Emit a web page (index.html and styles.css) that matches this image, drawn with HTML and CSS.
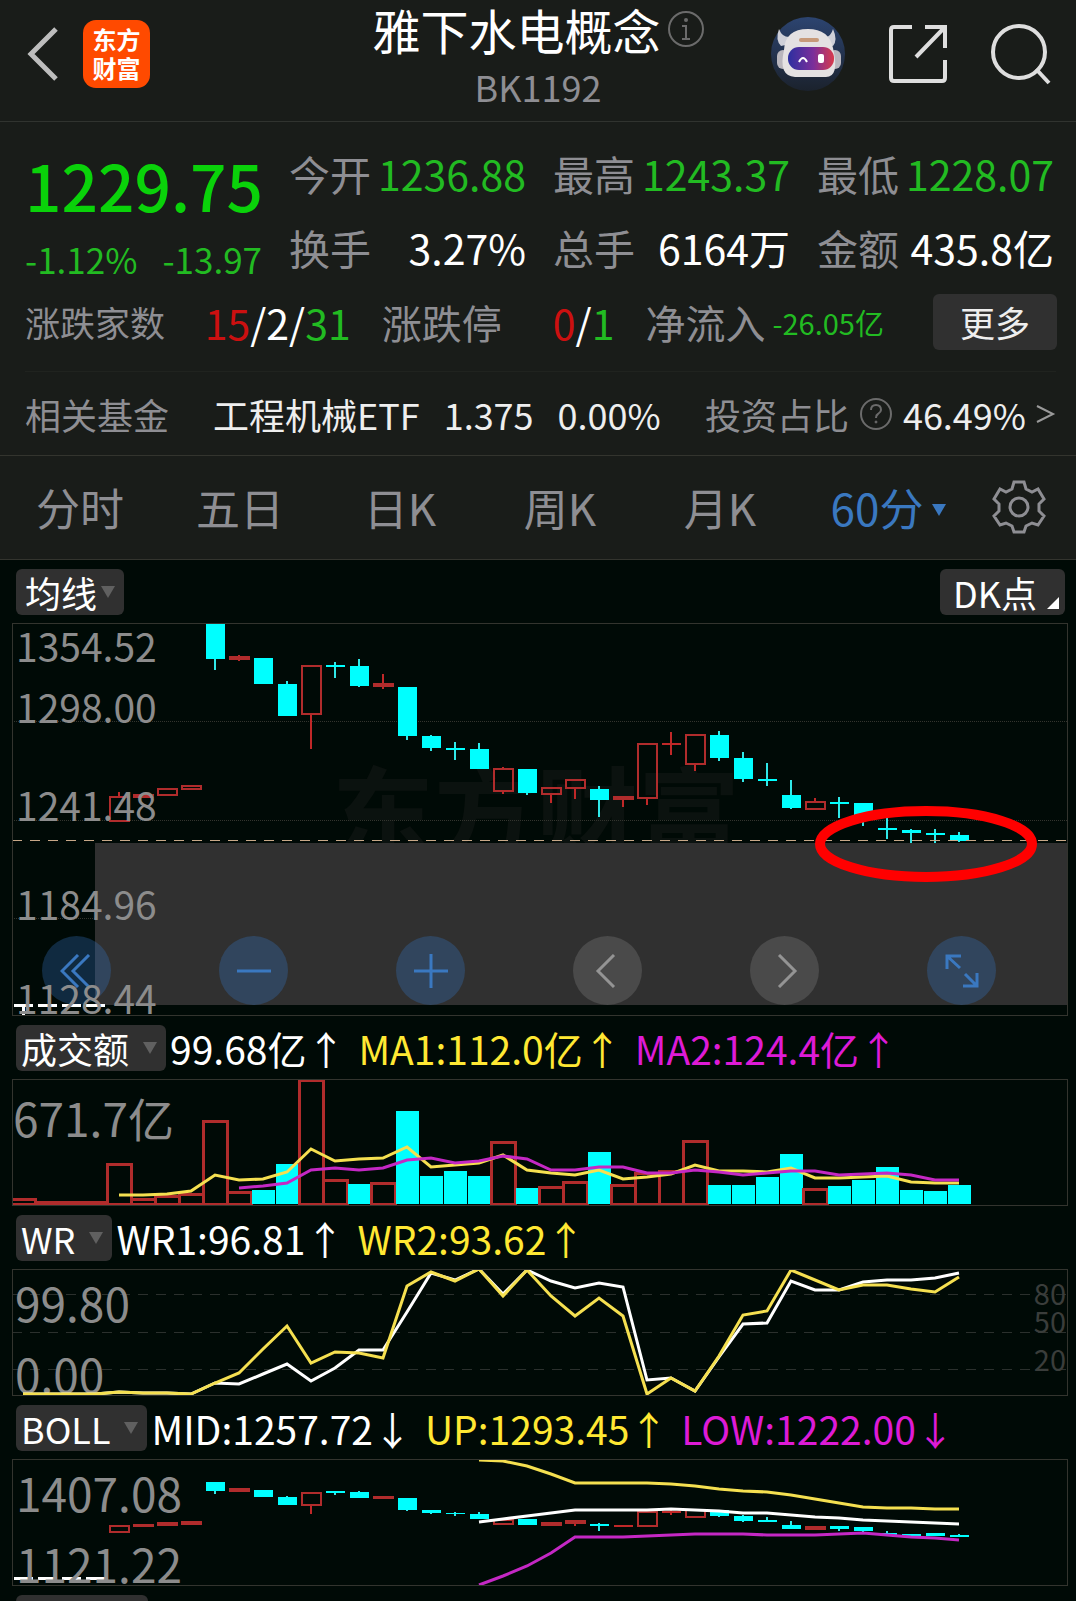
FILE: index.html
```html
<!DOCTYPE html>
<html lang="zh-CN">
<head>
	<meta charset="UTF-8"/>
	<meta name="viewport" content="width=device-width, initial-scale=1"/>
	<title>雅下水电概念 BK1192</title>
	<link rel="stylesheet" href="styles.css">
</head>
<body>

<header class="topbar">
	<div class="topbar-left">
		<button class="icon-btn" aria-label="返回">
			<svg width="34" height="56" viewBox="0 0 34 56"><path d="M32 3 L7 28 L32 53" fill="none" stroke="#bdbdbd" stroke-width="5"/></svg>
		</button>
		<a class="logo" href="#">东方<br>财富</a>
	</div>
	<div class="topbar-title">
		<h1>雅下水电概念
			<svg width="36" height="36" viewBox="0 0 36 36"><circle cx="18" cy="18" r="17" fill="none" stroke="#6b6b6b" stroke-width="2"/><circle cx="18" cy="9" r="2" fill="#6b6b6b"/><path d="M14 15 H18 V28 M14 28 H22" fill="none" stroke="#6b6b6b" stroke-width="2"/></svg>
		</h1>
		<p>BK1192</p>
	</div>
	<div class="topbar-right">
		<button class="icon-btn" aria-label="智能助手">
			<svg width="76" height="76" viewBox="0 0 76 76">
				<defs>
					<linearGradient id="sky" x1="0" y1="0" x2="0" y2="1"><stop offset="0" stop-color="#2c4470"/><stop offset="1" stop-color="#1b222d"/></linearGradient>
					<linearGradient id="visor" x1="0" y1="0" x2="1" y2="0"><stop offset="0" stop-color="#2c2fa0"/><stop offset="0.55" stop-color="#7b2f9a"/><stop offset="1" stop-color="#d83a4c"/></linearGradient>
				</defs>
				<circle cx="38" cy="38" r="37" fill="url(#sky)"/>
				<path d="M9 13 Q5 24 11 30 L20 28 L19 21 Q12 21 9 13 Z" fill="#cfd0d8"/>
				<path d="M63 13 Q68 24 63 30 L54 28 L56 21 Q61 20 63 13 Z" fill="#cfd0d8"/>
				<rect x="7" y="34" width="12" height="19" rx="6" fill="#b9b6bd"/>
				<rect x="59" y="34" width="12" height="19" rx="6" fill="#b9b6bd"/>
				<path d="M14 34 Q15 13 38 13 Q59 13 63 32 Q70 62 55 61 H25 Q8 60 14 34 Z" fill="#e4e1e2"/>
				<path d="M31 24 H47" stroke="#c79a7a" stroke-width="4" stroke-linecap="round"/>
				<rect x="18" y="31" width="46" height="23" rx="11" fill="url(#visor)"/>
				<path d="M29 46 Q33 38 37 46" fill="none" stroke="#ffffff" stroke-width="2"/>
				<rect x="48" y="38" width="6" height="9" rx="2" fill="#ffffff"/>
			</svg>
		</button>
		<button class="icon-btn" aria-label="分享">
			<svg width="60" height="60" viewBox="0 0 60 60"><path d="M24 3 H6 Q3 3 3 6 V54 Q3 57 6 57 H54 Q57 57 57 54 V36 M37 3 H57 V24 M57 3 L28 33" fill="none" stroke="#dedede" stroke-width="4"/></svg>
		</button>
		<button class="icon-btn" aria-label="搜索">
			<svg width="62" height="62" viewBox="0 0 62 62"><circle cx="29" cy="29" r="26" fill="none" stroke="#dedede" stroke-width="4"/><path d="M46 46 L59 60" stroke="#dedede" stroke-width="4"/></svg>
		</button>
	</div>
</header>

<section class="quote">
	<div class="quote-grid">
		<div class="price">
			<strong>1229.75</strong>
			<div class="change"><span>-1.12%</span><span>-13.97</span></div>
		</div>
		<div class="stat"><span class="label">今开</span><span class="down">1236.88</span></div>
		<div class="stat"><span class="label">最高</span><span class="down">1243.37</span></div>
		<div class="stat"><span class="label">最低</span><span class="down">1228.07</span></div>
		<div class="stat"><span class="label">换手</span><span>3.27%</span></div>
		<div class="stat"><span class="label">总手</span><span>6164万</span></div>
		<div class="stat"><span class="label">金额</span><span>435.8亿</span></div>
	</div>
	<div class="breadth">
		<div class="stat"><span class="label small">涨跌家数</span><span><b class="up">15</b>/2/<b class="down">31</b></span></div>
		<div class="stat"><span class="label">涨跌停</span><span><b class="up">0</b>/<b class="down">1</b></span></div>
		<div class="stat inflow"><span class="label">净流入</span><span class="down">-26.05亿</span></div>
		<button class="more">更多</button>
	</div>
	<div class="fund">
		<span class="label">相关基金</span>
		<a class="fund-name" href="#">工程机械ETF</a>
		<span>1.375</span>
		<span>0.00%</span>
		<a class="fund-ratio" href="#">
			<span class="label">投资占比</span>
			<svg width="34" height="34" viewBox="0 0 34 34"><circle cx="17" cy="17" r="15" fill="none" stroke="#6b6b6b" stroke-width="2"/><path d="M12 13 Q12 8 17 8 Q22 8 22 13 Q22 15 19 17 Q17 18 17 21" fill="none" stroke="#6b6b6b" stroke-width="2"/><circle cx="17" cy="25" r="1" fill="#6b6b6b" stroke="#6b6b6b"/></svg>
			<span>46.49%</span>
			<svg width="20" height="20" viewBox="0 0 20 20"><path d="M1 2 L17 10 L1 18" fill="none" stroke="#9a9a9a" stroke-width="2"/></svg>
		</a>
	</div>
</section>

<nav class="tabs">
	<button>分时</button>
	<button>五日</button>
	<button>日K</button>
	<button>周K</button>
	<button>月K</button>
	<button class="active">60分<i class="caret"></i></button>
	<button class="gear" aria-label="设置">
		<svg width="54" height="54" viewBox="-27 -27 54 54">
			<path d="M-5 -25 H5 L7 -18 L13 -15 L19 -18 L25 -8 L20 -3 V4 L25 9 L19 18 L13 16 L7 19 L5 25 H-5 L-7 19 L-13 16 L-19 18 L-25 9 L-20 4 V-3 L-25 -8 L-19 -18 L-13 -15 L-7 -18 Z" fill="none" stroke="#8e8e93" stroke-width="3"/>
			<circle r="9" fill="none" stroke="#8e8e93" stroke-width="3"/>
		</svg>
	</button>
</nav>

<main class="charts">
	<div class="chart-head">
		<button class="pill tight">均线<i class="caret"></i></button>
		<button class="pill corner">DK点</button>
	</div>
	<div class="chart">
		<div class="mask"></div>
		<div class="tools">
			<button aria-label="展开"><svg width="34" height="34" viewBox="0 0 34 34"><path d="M18 1 L2 17 L18 33 M29 1 L13 17 L29 33"/></svg></button>
			<button aria-label="缩小"><svg width="34" height="34" viewBox="0 0 34 34"><path d="M0 17 H34"/></svg></button>
			<button aria-label="放大"><svg width="34" height="34" viewBox="0 0 34 34"><path d="M0 17 H34 M17 0 V34"/></svg></button>
			<button class="muted" aria-label="左移"><svg width="34" height="34" viewBox="0 0 34 34"><path d="M23 1 L7 17 L23 33"/></svg></button>
			<button class="muted" aria-label="右移"><svg width="34" height="34" viewBox="0 0 34 34"><path d="M11 1 L27 17 L11 33"/></svg></button>
			<button aria-label="全屏"><svg width="34" height="34" viewBox="0 0 34 34"><path d="M2 15 V2 H16 M2 2 L15 14 M20 20 L32 32 M32 19 V32 H18"/></svg></button>
		</div>
		<svg id="kline" viewBox="0 0 1056 393"></svg>
	</div>

	<div class="chart-head">
		<button class="pill">成交额<i class="caret"></i></button>
		<span class="reading">99.68亿↑</span>
		<span class="reading yellow">MA1:112.0亿↑</span>
		<span class="reading magenta">MA2:124.4亿↑</span>
	</div>
	<div class="chart"><svg id="volume" viewBox="0 0 1056 127"></svg></div>

	<div class="chart-head">
		<button class="pill">WR<i class="caret"></i></button>
		<span class="reading">WR1:96.81↑</span>
		<span class="reading yellow">WR2:93.62↑</span>
	</div>
	<div class="chart"><svg id="wr" viewBox="0 0 1056 127"></svg></div>

	<div class="chart-head">
		<button class="pill">BOLL<i class="caret"></i></button>
		<span class="reading">MID:1257.72↓</span>
		<span class="reading yellow">UP:1293.45↑</span>
		<span class="reading magenta">LOW:1222.00↓</span>
	</div>
	<div class="chart"><svg id="boll" viewBox="0 0 1056 127"></svg></div>

	<div class="chart-head">
		<button class="pill next" aria-label="指标"></button>
	</div>
</main>

<script src="charts.js"></script>
</body>
</html>
```
FILE: styles.css
```css
* {
    box-sizing: border-box;
}

body {
    margin: 0;
    height: 100vh;
    overflow: hidden;
    background-color: #000a06;
    color: #ffffff;
    font-family: "Noto Sans CJK SC", "Noto Sans", sans-serif;
    font-size: 41px;
}

button {
    padding: 0;
    border: none;
    background: none;
    color: inherit;
    font: inherit;
    cursor: pointer;
}

a {
    color: inherit;
    text-decoration: none;
}

svg {
    display: block;
}

.label {
    color: #8e8e93;
}

.up {
    color: #cc1010;
    font-weight: normal;
}

.down {
    color: #22bb22;
    font-weight: normal;
}

/* Top bar */
.topbar {
    display: grid;
    grid-template-columns: 1fr auto 1fr;
    height: 122px;
    padding: 0 24px;
    background-color: #191c19;
    border-bottom: 1px solid #30332f;
}

.topbar-left,
.topbar-right {
    display: flex;
    align-items: center;
    height: 108px;
}

.topbar-left {
    gap: 25px;
}

.topbar-right {
    justify-content: flex-end;
    gap: 42px;
}

.logo {
    width: 67px;
    height: 68px;
    padding-top: 4px;
    border-radius: 13px;
    background-color: #ff4a00;
    font-size: 24px;
    font-weight: bold;
    line-height: 29px;
    text-align: center;
}

.topbar-title {
    text-align: center;
}

.topbar-title h1 {
    display: flex;
    align-items: center;
    gap: 7px;
    margin: 0;
    font-size: 48px;
    font-weight: normal;
    line-height: 58px;
}

.topbar-title p {
    margin: 0;
    color: #8e8e93;
    font-size: 36px;
    line-height: 56px;
}

/* Quote */
.quote {
    background-color: #191c19;
    border-bottom: 1px solid #33342e;
}

.quote-grid {
    display: grid;
    grid-template-columns: repeat(4, minmax(0, 1fr));
    grid-auto-rows: 74px;
    column-gap: 27px;
    padding: 14px 22px 0 25px;
}

.price {
    grid-row: span 2;
    color: #0ad20a;
}

.price strong {
    display: block;
    font-size: 64px;
    font-weight: 500;
    line-height: 96px;
}

.change {
    display: flex;
    justify-content: space-between;
    color: #22bb22;
    font-size: 35px;
    line-height: 54px;
}

.stat {
    display: flex;
    align-items: center;
    justify-content: space-between;
    white-space: nowrap;
}

.breadth {
    display: grid;
    grid-template-columns: 326fr 233fr 257fr 124fr;
    column-gap: 31px;
    align-items: center;
    height: 75px;
    padding: 0 19px 0 25px;
}

.breadth .label {
    font-size: 40px;
}

.breadth .small {
    font-size: 35px;
}

.breadth .inflow {
    justify-content: flex-start;
    gap: 7px;
}

.inflow .down {
    font-size: 29px;
}

.more {
    height: 56px;
    border-radius: 6px;
    background-color: #303030;
    color: #eeeeee;
    font-size: 35px;
    line-height: 50px;
}

.fund {
    display: flex;
    align-items: center;
    gap: 24px;
    height: 84px;
    margin: 12px 20px 0 25px;
    border-top: 1px solid #20231f;
    color: #eeeeee;
    font-size: 36px;
}

.fund-name {
    margin-left: 20px;
}

.fund-ratio {
    display: flex;
    align-items: center;
    gap: 10px;
    margin-left: auto;
}

/* Period tabs */
.tabs {
    display: grid;
    grid-template-columns: repeat(5, 160fr) 177fr 99fr;
    height: 104px;
    padding-bottom: 2px;
    background-color: #191c19;
    border-bottom: 1px solid #33342e;
    color: #8e8e93;
    font-size: 44px;
}

.tabs .active {
    color: #3a78c0;
}

.caret {
    display: inline-block;
    border: 7px solid transparent;
    border-top: 12px solid #606060;
    border-bottom: none;
}

.tabs .caret {
    margin-left: 9px;
    margin-bottom: 10px;
    border-top-color: #3a78c0;
}

.gear svg {
    margin-left: 15px;
}

/* Charts */
.charts {
    padding: 0 8px 0 12px;
}

.chart-head {
    display: flex;
    align-items: center;
    height: 63px;
    padding: 0 3px 0 4px;
    white-space: nowrap;
}

.pill {
    display: flex;
    align-items: center;
    height: 46px;
    margin-right: 4px;
    padding: 0 9px 0 5px;
    border-radius: 6px;
    background-color: #303030;
    font-size: 36px;
    line-height: 46px;
}

.pill .caret {
    margin-left: 14px;
}

.pill.tight {
    padding-left: 9px;
}

.pill.tight .caret {
    margin-left: 4px;
}

.pill.corner {
    position: relative;
    margin-left: auto;
    margin-right: 0;
    padding: 0 28px 0 13px;
}

.corner::after {
    content: "";
    position: absolute;
    right: 6px;
    bottom: 6px;
    border-left: 12px solid transparent;
    border-bottom: 12px solid #ffffff;
}

.pill.next {
    width: 132px;
}

.reading {
    margin-right: 13px;
    font-size: 39px;
}

.yellow {
    color: #ffe833;
}

.magenta {
    color: #dd1bd6;
}

.chart {
    position: relative;
}

.chart > svg {
    position: relative;
    width: 100%;
    outline: 1px solid #33342e;
    outline-offset: -1px;
    pointer-events: none;
}

.mask {
    position: absolute;
    top: 56%;
    right: 0;
    bottom: 11px;
    left: 83px;
    background-color: #303030;
}

.tools {
    position: absolute;
    right: 72px;
    bottom: 11px;
    left: 30px;
    display: flex;
    justify-content: space-between;
}

.tools button {
    display: grid;
    place-items: center;
    width: 69px;
    height: 69px;
    border-radius: 50%;
    background-color: rgba(54, 120, 200, 0.3);
}

.tools .muted {
    background-color: rgba(150, 150, 150, 0.25);
}

.tools path {
    fill: none;
    stroke: #3a78c0;
    stroke-width: 3;
}

.tools .muted path {
    stroke: #949494;
}

/* Chart marks */
.chart rect,
.chart line {
    shape-rendering: crispEdges;
}

.cyan-fill {
    fill: #00ffff;
}

.red-box {
    fill: none;
    stroke: #b02c2c;
    stroke-width: 2;
}

.red-box.bar {
    stroke-width: 3;
}

.wick-c {
    stroke: #30e8e8;
    stroke-width: 2;
}

.wick-r {
    stroke: #c02828;
    stroke-width: 2;
}

.wick-w {
    stroke: #ffffff;
    stroke-width: 3;
}

.line {
    fill: none;
    stroke: #ffffff;
    stroke-width: 3;
}

.line.l-yellow {
    stroke: #f5e050;
}

.line.l-magenta {
    stroke: #c428c4;
}

.dots {
    stroke: #33342e;
    stroke-dasharray: 1 1;
}

.dashes {
    stroke: #2b302d;
    stroke-dasharray: 10 8;
}

.last {
    stroke: #c8a888;
    stroke-dasharray: 10 8;
}

.axis {
    fill: #8c8c8c;
    font-size: 39px;
}

.axis.big {
    font-size: 46px;
}

.axis.dim {
    fill: #3a3d3b;
    font-size: 29px;
    text-anchor: end;
}

.watermark {
    fill: #0b120f;
    font-size: 102px;
    font-weight: bold;
}

.ring {
    fill: none;
    stroke: #ff0000;
    stroke-width: 10;
}
```
FILE: charts.js
```js
const STEP = 24;
const FIRST = 11;

function x(i)
{
    return FIRST + STEP * i;
}

function text(cls, px, py, value)
{
    return `<text class="${cls}" x="${px}" y="${py}">${value}</text>`;
}

function hline(cls, y, from = 0)
{
    return `<line class="${cls}" x1="${from}" x2="1056" y1="${y}" y2="${y}"/>`;
}

// candle: [colour, top, bottom, high, low], colour is c, r or w
function candles(list)
{
    return list.map(([color, top, bottom, high = top, low = bottom], i) =>
    {
        const cx = x(i);
        const wick = (a, b) => b > a ? `<line class="wick-${color}" x1="${cx}" x2="${cx}" y1="${a}" y2="${b}"/>` : "";
        if (color === "w")
        {
            return `<line class="wick-w" x1="${cx - 9}" x2="${cx + 10}" y1="${top}" y2="${top}"/>` + wick(top, low);
        }
        if (color === "c")
        {
            return `<rect class="cyan-fill" x="${cx - 9}" y="${top}" width="19" height="${bottom - top}"/>` + wick(high, top) + wick(bottom, low);
        }
        // flat red candle is just a crossbar
        if (bottom - top < 3)
        {
            return `<line class="wick-r" x1="${cx - 9}" x2="${cx + 10}" y1="${top + 1}" y2="${top + 1}"/>` + wick(high, low);
        }
        return `<rect class="red-box" x="${cx - 9}" y="${top + 1}" width="19" height="${bottom - top - 2}"/>` + wick(high, top) + wick(bottom, low);
    }).join("");
}

function line(cls, start, values)
{
    const points = values.map((v, i) => `${x(start + i)},${v}`).join(" ");
    return `<polyline class="line ${cls}" points="${points}"/>`;
}

const kline = [
    ["w", 382, 382, 382, 393], ["w", 382, 382], ["w", 382, 382], ["w", 382, 382],
    ["r", 173, 199, 169], ["r", 171, 175], ["r", 165, 173], ["r", 162, 167],
    ["c", 0, 36, 0, 47], ["r", 33, 37, 32, 38], ["c", 35, 61], ["c", 61, 93, 58],
    ["r", 42, 92, 42, 126], ["c", 42, 44, 39, 55], ["c", 43, 63, 36, 64], ["r", 60, 64, 51, 66],
    ["c", 64, 113, 64, 117], ["c", 113, 125, 112, 128], ["c", 125, 127, 119, 137], ["c", 126, 146, 120],
    ["r", 145, 169, 144, 171], ["c", 146, 170, 146, 172], ["r", 164, 172, 164, 180], ["r", 156, 166, 156, 176],
    ["c", 166, 177, 163, 194], ["r", 173, 177, 173, 184], ["r", 120, 176, 120, 182], ["r", 120, 122, 109, 132],
    ["r", 111, 142, 111, 148], ["c", 112, 135, 108, 138], ["c", 135, 156, 129, 159], ["c", 156, 158, 140, 163],
    ["c", 172, 185, 157, 186], ["r", 178, 187, 175], ["c", 179, 181, 174, 195], ["c", 180, 192, 180, 203],
    ["c", 205, 207, 194, 216], ["c", 207, 210, 206, 220], ["c", 210, 212, 206, 220], ["c", 212, 218, 209, 219]
];

document.getElementById("kline").innerHTML =
    text("watermark", 320, 230, "东方财富") +
    `<rect x="83" y="220" width="973" height="24" fill="#303030"/>` +
    hline("dots", 98) + hline("dots", 197) +
    `<line class="dots" x1="0" x2="83" y1="295" y2="295"/>` +
    candles(kline) +
    text("axis", 4, 39, "1354.52") +
    text("axis", 4, 100, "1298.00") +
    text("axis", 4, 198, "1241.48") +
    text("axis", 4, 297, "1184.96") +
    text("axis", 4, 391, "1128.44") +
    hline("last", 217) +
    `<ellipse class="ring" cx="914" cy="221" rx="106" ry="33"/>`;

// volume: [colour, top]
const volume = [
    ["r", 120], ["r", 123], ["r", 123], ["r", 123], ["r", 85], ["r", 120], ["r", 117], ["r", 115],
    ["r", 42], ["r", 113], ["c", 111], ["c", 85], ["r", 1], ["r", 101], ["c", 105], ["r", 104],
    ["c", 32], ["c", 97], ["c", 92], ["c", 97], ["r", 63], ["c", 109], ["r", 108], ["r", 103],
    ["c", 73], ["r", 106], ["r", 94], ["r", 92], ["r", 62], ["c", 106], ["c", 106], ["c", 98],
    ["c", 75], ["r", 110], ["c", 107], ["c", 101], ["c", 88], ["c", 111], ["c", 112], ["c", 106]
];

document.getElementById("volume").innerHTML =
    volume.map(([color, top], i) => color === "c"
        ? `<rect class="cyan-fill" x="${x(i) - 11}" y="${top}" width="23" height="${125 - top}"/>`
        : `<rect class="red-box bar" x="${x(i) - 12}" y="${top}" width="24" height="${125 - top}"/>`).join("") +
    text("axis big", 1, 58, "671.7亿") +
    line("l-yellow", 4, [116, 116, 115, 112, 96, 101, 100, 93, 70, 82, 80, 79, 68, 88, 86, 84, 76, 91,
        94, 96, 91, 100, 98, 95, 86, 92, 92, 93, 89, 99, 99, 98, 97, 103, 104, 104]) +
    line("l-magenta", 9, [109, 107, 104, 91, 89, 91, 89, 81, 79, 84, 82, 77, 80,
        91, 91, 88, 88, 94, 94, 91, 93, 96, 94, 92, 92, 96, 95, 94, 96, 101, 101]);

document.getElementById("wr").innerHTML =
    hline("dashes", 25) + hline("dashes", 63) + hline("dashes", 100) +
    text("axis big", 3, 53, "99.80") +
    text("axis big", 3, 124, "0.00") +
    text("axis dim", 1054, 36, "80") +
    text("axis dim", 1054, 64, "50") +
    text("axis dim", 1054, 102, "20") +
    line("", 0, [125, 125, 125, 125, 123, 124, 124, 125, 114, 115, 105, 95, 112, 99, 81, 81, 43, 4, 11, 0,
        25, 1, 12, 19, 14, 18, 111, 109, 122, 88, 55, 54, 12, 21, 21, 13, 11, 11, 9, 4]) +
    line("l-yellow", 0, [125, 125, 125, 125, 123, 124, 124, 125, 114, 104, 80, 57, 94, 83, 84, 89, 17, 3, 12, 0,
        27, 1, 27, 47, 29, 47, 125, 109, 122, 87, 46, 42, 1, 11, 21, 16, 16, 20, 23, 8]);

const boll = [
    ["w", 119, 119, 119, 121], ["w", 119, 119], ["w", 119, 119], ["w", 119, 119],
    ["r", 66, 74], ["r", 65, 68], ["r", 63, 67], ["r", 62, 66],
    ["c", 23, 32, 23, 35], ["r", 29, 33], ["c", 31, 38], ["c", 38, 46, 37],
    ["r", 33, 47, 33, 55], ["c", 32, 34, 32, 36], ["c", 33, 39, 32], ["r", 37, 40],
    ["c", 39, 51, 39, 52], ["c", 51, 54, 51, 55], ["c", 54, 55, 53, 57], ["c", 55, 60, 53],
    ["r", 60, 66], ["c", 60, 66], ["r", 63, 67], ["r", 61, 65, 61, 67],
    ["c", 65, 67, 64, 72], ["r", 66, 68], ["r", 52, 68], ["r", 52, 54, 50, 56],
    ["r", 50, 59], ["c", 51, 57, 51, 58], ["c", 57, 62, 56, 63], ["c", 61, 63, 58],
    ["c", 66, 70, 62], ["r", 67, 71], ["c", 67, 70, 67, 72], ["c", 68, 72, 68, 74],
    ["c", 74, 76, 72, 77], ["c", 75, 77], ["c", 74, 77], ["c", 76, 78, 75, 78]
];

document.getElementById("boll").innerHTML =
    candles(boll) +
    text("axis big", 4, 53, "1407.08") +
    text("axis big", 4, 124, "1121.22") +
    line("l-yellow", 19, [1, 2, 7, 15, 24, 24, 24, 24, 25, 27, 30, 32, 33, 36, 40, 44, 48, 49, 49, 50, 50]) +
    line("", 19, [63, 60, 57, 54, 51, 51, 51, 51, 50, 51, 52, 54, 54, 56, 58, 59, 61, 62, 63, 64, 65]) +
    line("l-magenta", 19, [126, 117, 107, 94, 78, 78, 78, 77, 76, 75, 75, 75, 76, 76, 76, 75, 74, 76, 78, 79, 81]);
```
